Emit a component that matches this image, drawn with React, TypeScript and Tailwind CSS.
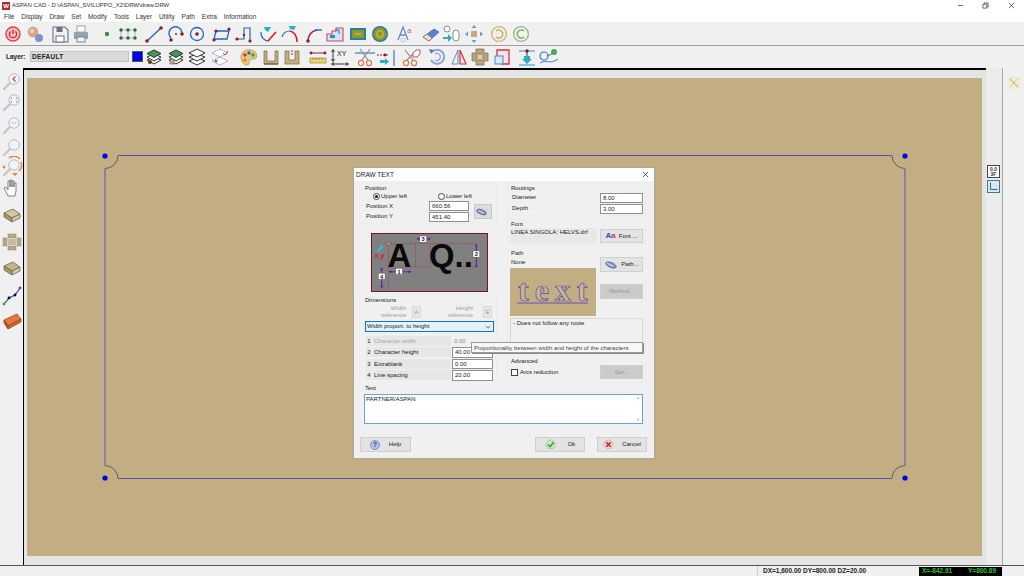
import type { ReactNode } from 'react';

const menus = ['File', 'Display', 'Draw', 'Set', 'Modify', 'Tools', 'Layer', 'Utility', 'Path', 'Extra', 'Information'];

function Ic({ className = '', children }: { className?: string; children: ReactNode }) {
  return (
    <svg viewBox="0 0 22 22" className={`w-[22px] h-[22px] shrink-0 ${className}`} fill="none">
      {children}
    </svg>
  );
}

const Dot = ({ x, y, c = '#8a1c2c', r = 1.4 }: { x: number; y: number; c?: string; r?: number }) => (
  <circle cx={x} cy={y} r={r} fill={c} />
);

function Magnifier({ children }: { children?: ReactNode }) {
  return (
    <Ic>
      <path d="M9 13 L3 19" stroke="#c4c4c4" strokeWidth="2.2" strokeLinecap="round" />
      <circle cx="13" cy="9" r="5.2" fill="#f0f3f8" stroke="#b4bdca" strokeWidth="1" />
      {children}
    </Ic>
  );
}

function Layers({ c, stroke = '#333', children }: { c: string; stroke?: string; children?: ReactNode }) {
  return (
    <Ic>
      <path d="M11 11 L18 14 L11 18 L4 14 Z" fill="#fff" stroke={stroke} />
      <path d="M11 8 L18 11 L11 15 L4 11 Z" fill="#fff" stroke={stroke} />
      <path d="M11 4 L18 7.5 L11 11.5 L4 7.5 Z" fill={c} stroke={stroke} />
      {children}
    </Ic>
  );
}

function BoxIcon({ top = '#c4b48a' }: { top?: string }) {
  return (
    <Ic>
      <path d="M3 9 L12 5 L19 10 L11 14 Z" fill={top} stroke="#6a6450" strokeWidth="0.8" />
      <path d="M3 9 L3 13 L11 18 L11 14 Z" fill="#a8986e" stroke="#6a6450" strokeWidth="0.8" />
      <path d="M11 14 L19 10 L19 14 L11 18 Z" fill="#d4c8a8" stroke="#6a6450" strokeWidth="0.8" />
    </Ic>
  );
}

function Field({ value, className = 'w-[40px] h-[10px]' }: { value: string; className?: string }) {
  return (
    <div className={`${className} bg-white border border-[#8f8f8f] pl-[2px] leading-[9px] shrink-0`}>{value}</div>
  );
}

function Btn({ className, icon, label, disabled }: { className: string; icon?: ReactNode; label: string; disabled?: boolean }) {
  return (
    <div
      className={`${className} flex items-center justify-center shrink-0 border border-[#d0d0d0] ${
        disabled ? 'bg-[#cbcbcb] text-[#9a9a9a]' : 'bg-[#e3e3e3]'
      }`}
    >
      {icon}
      <span>{label}</span>
    </div>
  );
}

const GroupLabel = ({ children }: { children: ReactNode }) => <div className="h-[7px] leading-[7px]">{children}</div>;

const PathGlyph = () => (
  <svg viewBox="0 0 14 10" className="w-[14px] h-[10px] mr-[3px]" fill="none">
    <ellipse cx="7" cy="5" rx="5.5" ry="2.4" transform="rotate(22 7 5)" fill="#8f9ed0" stroke="#4a568f" strokeWidth="0.8" />
    <path d="M3 3 L9 6.5" stroke="#e8e8f4" strokeWidth="0.9" />
  </svg>
);

function DimRow({ n, label, value, off }: { n: string; label: string; value: string; off?: boolean }) {
  return (
    <div className="flex h-[11.5px] items-center">
      <div className="w-[6px] ml-[1px] h-[10px] bg-[#e8e8e8] text-center leading-[10px]">{n}</div>
      <div className={`w-[78px] ml-[1px] h-[10px] bg-[#e6e6e6] pl-[1px] leading-[10px] ${off ? 'text-[#a8a8a8]' : ''}`}>{label}</div>
      {off ? (
        <div className="w-[41px] ml-[1px] h-[10px] pl-[2px] leading-[10px] text-[#8a8a8a]">{value}</div>
      ) : (
        <Field value={value} className="w-[41px] ml-[1px] h-[10.5px]" />
      )}
    </div>
  );
}

function Preview() {
  return (
    <svg viewBox="0 0 117 59" className="ml-[12px] mt-[9px] w-[117px] h-[59px] block border border-[#7c1522] bg-[#808080]">
      <g stroke="#a03040" strokeWidth="0.6" strokeDasharray="1.5 1">
        <path d="M16 10 H107 M44 10 V34 M59 10 V34 M16 34 H59 M16 10 V57 M88 34 H107" />
      </g>
      <text x="15" y="34" fontFamily="Liberation Sans" fontWeight="700" fontSize="34" fill="#0a0a0a">A</text>
      <text x="58" y="34" fontFamily="Liberation Sans" fontWeight="700" fontSize="34" fill="#0a0a0a">Q..</text>
      <g stroke="#6a1fa0" strokeWidth="1.1">
        <path d="M46 5 H59 M107 11 V34 M17 39 H39 M9 35 V56" />
      </g>
      <path
        d="M45 5 L48 3.4 V6.6 Z M60 5 L57 3.4 V6.6 Z M107 10 L105.4 13 H108.6 Z M107 35 L105.4 32 H108.6 Z M16 39 L19 37.4 V40.6 Z M40 39 L37 37.4 V40.6 Z M9 34.5 L7.4 37.5 H10.6 Z M9 56.5 L7.4 53.5 H10.6 Z"
        fill="#6a1fa0"
      />
      <circle cx="16" cy="10" r="1.6" fill="#d8a070" stroke="#6a3a20" strokeWidth="0.5" />
      <path d="M5 18 L10 12" stroke="#20c8d8" strokeWidth="2.2" />
      <text x="1.5" y="25" fontFamily="Liberation Sans" fontWeight="700" fontSize="7.5" fill="#d02030">x,y</text>
      {[
        ['3', 48.5, 2],
        ['2', 103.5, 17.5],
        ['1', 23.5, 35.5],
        ['4', 5.5, 40.5],
      ].map(([n, x, y]) => (
        <g key={n as string}>
          <rect x={x as number} y={y as number} width="7" height="6.5" fill="#fff" stroke="#333" strokeWidth="0.4" />
          <text x={(x as number) + 1.8} y={(y as number) + 5.6} fontFamily="Liberation Sans" fontWeight="700" fontSize="6" fill="#111">{n}</text>
        </g>
      ))}
    </svg>
  );
}

function Dialog() {
  return (
    <div className="absolute left-[353px] top-[167px] w-[302px] h-[292px] bg-[#f0f0f0] border border-[#aaa69a] text-[6px] text-[#1a1a1a] flex flex-col">
      <div className="h-[13px] shrink-0 bg-white flex items-center justify-between pl-[2px] pr-[5px] text-[6.5px]">
        <span>DRAW TEXT</span>
        <svg viewBox="0 0 8 8" className="w-[7px] h-[7px]" stroke="#333" strokeWidth="0.9"><path d="M1 1 L7 7 M7 1 L1 7" /></svg>
      </div>

      <div className="flex h-[203px] shrink-0">
        {/* left column */}
        <div className="w-[148px] ml-[5px] flex flex-col">
          <div className="mt-[2px] h-[41px] w-[138px] pl-[5px] pt-[1px] border border-[#ececec]">
            <GroupLabel>Position</GroupLabel>
            <div className="flex h-[9px] items-center ml-[8px]">
              <div className="flex items-center w-[65px]">
                <div className="w-[7px] h-[7px] rounded-full border border-[#444] bg-white flex items-center justify-center mr-[1px]">
                  <div className="w-[3px] h-[3px] rounded-full bg-[#111]" />
                </div>
                Upper left
              </div>
              <div className="flex items-center">
                <div className="w-[7px] h-[7px] rounded-full border border-[#444] bg-white mr-[1px]" />
                Lower left
              </div>
            </div>
            <div className="flex items-center">
              <div className="ml-[1px] w-[103px]">
                <div className="flex h-[10.5px] items-center"><span className="w-[63px]">Position X</span><Field value="660.56" /></div>
                <div className="flex h-[10.5px] items-center"><span className="w-[63px]">Position Y</span><Field value="451.40" /></div>
              </div>
              <div className="ml-[5px] w-[18px] h-[15px] bg-[#dcdcdc] border border-[#c8c8c8] flex items-center justify-center">
                <PathGlyph />
              </div>
            </div>
          </div>

          <Preview />

          <div className="mt-[4px] w-[138px] h-[84px] pl-[5px] border border-[#ececec]">
            <GroupLabel>Dimensions</GroupLabel>
            <div className="flex h-[13px] mt-[1px] items-center text-[#a0a0a0] leading-[7px] text-right">
              <div className="w-[41px]">Width<br />reference</div>
              <div className="ml-[6px] w-[9px] h-[12px] bg-[#e6e6e6] border border-[#d8d8d8] text-center leading-[10px]">A</div>
              <div className="ml-[13px] w-[39px]">Height<br />reference</div>
              <div className="ml-[10px] w-[9px] h-[12px] bg-[#e6e6e6] border border-[#d8d8d8] text-center leading-[10px]">E</div>
            </div>
            <div className="mt-[3px] w-[129px] h-[11px] bg-[#e5f1fb] border border-[#0078d7] flex items-center justify-between pl-[1px] pr-[2px]">
              <span>Width proport. to height</span>
              <svg viewBox="0 0 8 5" className="w-[6px] h-[4px]" fill="none" stroke="#333" strokeWidth="0.9"><path d="M1 1 L4 4 L7 1" /></svg>
            </div>
            <div className="mt-[3px]">
              <DimRow n="1" label="Character width" value="0.00" off />
              <DimRow n="2" label="Character height" value="40.00" />
              <DimRow n="3" label="Extrablank" value="0.00" />
              <DimRow n="4" label="Line spacing" value="20.00" />
            </div>
          </div>
        </div>

        {/* right column */}
        <div className="w-[139px] flex flex-col">
          <div className="mt-[2px] h-[33px] pl-[3px] pt-[1px] border border-[#ececec]">
            <GroupLabel>Routings</GroupLabel>
            <div className="flex h-[11px] items-center"><span className="w-[89px] pl-[1px]">Diameter</span><Field value="8.00" className="w-[43px] h-[10px]" /></div>
            <div className="flex h-[11px] items-center"><span className="w-[89px] pl-[1px]">Depth</span><Field value="3.00" className="w-[43px] h-[10px]" /></div>
          </div>

          <div className="mt-[3px] h-[26px] pl-[2px] pt-[1px] border border-[#ececec]">
            <div className="ml-[1px]"><GroupLabel>Font</GroupLabel></div>
            <div className="flex">
              <div className="w-[87px] h-[15px] bg-[#e8e8e8] pl-[1px] leading-[8px]">LINEA SINGOLA: HELVS.drf</div>
              <Btn
                className="ml-[3px] mt-[1px] w-[43px] h-[14px]"
                label="Font ..."
                icon={<span className="mr-[3px] text-[8px] font-bold text-[#1f4fc0]">A<span className="text-[#c04060]">a</span></span>}
              />
            </div>
          </div>

          <div className="mt-[3px] h-[135px] pl-[2px] pt-[1px] border border-[#ececec]">
            <div className="ml-[1px]"><GroupLabel>Path</GroupLabel></div>
            <div className="flex">
              <div className="w-[87px]">
                <div className="h-[11px] leading-[11px] pl-[1px]">None</div>
                <svg viewBox="0 0 86 48" className="w-[86px] h-[48px] block bg-[#c2ae82]">
                  <text x="8" y="33" fontFamily="Liberation Serif" fontWeight="700" fontSize="32" letterSpacing="6" fill="#c9b68e" stroke="#5a48b8" strokeWidth="0.7">text</text>
                  <path d="M7 35 H78" stroke="#5a48b8" strokeWidth="0.9" />
                </svg>
              </div>
              <div className="ml-[3px]">
                <Btn className="w-[43px] h-[15px]" label="Path..." icon={<PathGlyph />} />
                <Btn className="mt-[12px] w-[43px] h-[15px]" label="Method..." disabled />
              </div>
            </div>
            <div className="mt-[2px] w-[133px] h-[27px] border border-[#d8d8d8] pl-[2px] leading-[9px]">- Does not follow any route</div>
            <div className="mt-[13px] ml-[1px]"><GroupLabel>Advanced</GroupLabel></div>
            <div className="flex items-center">
              <div className="ml-[1px] w-[7px] h-[7px] bg-white border border-[#444]" />
              <span className="ml-[2px] w-[80px]">Arcs reduction</span>
              <Btn className="w-[43px] h-[14px]" label="Set..." disabled />
            </div>
          </div>
        </div>
      </div>

      <div className="ml-[11px] mt-[1px] h-[7px] leading-[7px]">Text</div>
      <div className="ml-[10px] mt-[2px] w-[279px] h-[30px] bg-white border border-[#6aa3d8] flex justify-between pl-[1px] leading-[9px]">
        <span>PARTNER/ASPAN</span>
        <div className="w-[7px] flex flex-col justify-between items-center text-[#b0b0b0] text-[4px] leading-[6px] pr-[1px]">
          <span>▲</span><span>▼</span>
        </div>
      </div>

      <div className="flex ml-[6px] mt-[13px]">
        <Btn
          className="w-[51px] h-[15px]"
          label="Help"
          icon={<div className="w-[10px] h-[10px] mr-[9px] rounded-full bg-[#b8c4e4] border border-[#7f8fc0] text-center text-[#2a3f90] font-bold text-[7px] leading-[8px]">?</div>}
        />
        <Btn
          className="ml-[124px] w-[50px] h-[15px]"
          label="Ok"
          icon={
            <svg viewBox="0 0 12 12" className="w-[11px] h-[11px] mr-[12px]">
              <circle cx="6" cy="6" r="5" fill="#c9e8c0" stroke="#8fb888" strokeWidth="0.6" />
              <path d="M3 6 L5.5 8.4 L9.4 3.6" fill="none" stroke="#2a9a40" strokeWidth="1.5" />
            </svg>
          }
        />
        <Btn
          className="ml-[12px] w-[50px] h-[15px]"
          label="Cancel"
          icon={
            <svg viewBox="0 0 12 12" className="w-[11px] h-[11px] mr-[8px]">
              <circle cx="6" cy="6" r="5" fill="#f4d0d0" stroke="#c89a9a" strokeWidth="0.6" />
              <path d="M3.6 3.6 L8.4 8.4 M8.4 3.6 L3.6 8.4" stroke="#d02030" strokeWidth="1.7" />
            </svg>
          }
        />
      </div>

      {/* tooltip */}
      <div className="absolute left-[117px] top-[174px] w-[172px] h-[11px] bg-[#f8f8f8] border border-[#9a9a9a] shadow-[1px_1px_0_#8a8a8a] pl-[2px] leading-[10px] text-[#444]">
        Proportionality between width and height of the characters
      </div>
    </div>
  );
}

function TopToolbar() {
  return (
    <div className="h-[23px] shrink-0 bg-[#f0f0f0] flex items-center pl-[2px]">
      <Ic>
        <circle cx="11" cy="11" r="7" fill="#f6c4c4" stroke="#e0404a" strokeWidth="1.4" />
        <path d="M8.6 8.4 A3.6 3.6 0 1 0 13.4 8.4 M11 6.5 V11" stroke="#d82030" strokeWidth="1.3" />
      </Ic>
      <Ic>
        <circle cx="9" cy="9" r="5.4" fill="#d8a888" />
        <circle cx="8" cy="8" r="2.2" fill="#ecd0bc" />
        <circle cx="15" cy="15" r="4" fill="#8090d0" />
      </Ic>
      <Ic className="ml-[3px]">
        <path d="M4 4 H16 L19 7 V19 H4 Z" fill="#eef0f4" stroke="#6a7280" strokeWidth="1.1" />
        <rect x="7.5" y="4" width="6" height="5" fill="#6a7280" />
        <rect x="7" y="13" width="8" height="6" fill="#fff" stroke="#6a7280" />
      </Ic>
      <Ic className="ml-[-1px]">
        <rect x="7" y="3" width="8" height="6" fill="#fff" stroke="#9aa4b0" />
        <rect x="4" y="9" width="14" height="7" fill="#96a2ae" />
        <rect x="7" y="14" width="8" height="5" fill="#f4f4f4" stroke="#7a8490" />
      </Ic>
      <Ic className="ml-[4px]"><circle cx="11" cy="11" r="2.2" fill="#3d8a44" /></Ic>
      <Ic className="ml-[-1px]">
        <path d="M4 7 H18 M4 15 H18 M11 7 V15 M4 7 V15 M18 7 V15" stroke="#7a9a70" strokeWidth="0.6" />
        {[4, 11, 18].map((x) => (
          <g key={x}><Dot x={x} y={7} c="#2c6a38" r={1.7} /><Dot x={x} y={15} c="#2c6a38" r={1.7} /></g>
        ))}
      </Ic>
      <Ic className="ml-[4px]">
        <path d="M4 18 L18 5" stroke="#2268b8" strokeWidth="1.4" />
        <Dot x={4} y={18} r={1.8} /><Dot x={18} y={5} r={1.8} />
      </Ic>
      <Ic>
        <path d="M6 15 A6.5 6.5 0 1 1 17 10" stroke="#2268b8" strokeWidth="1.3" />
        <Dot x={6} y={17} r={1.8} /><Dot x={17} y={11} r={1.8} /><Dot x={11} y={11} r={1} />
      </Ic>
      <Ic className="ml-[-1px]">
        <circle cx="11" cy="11" r="6.5" stroke="#2268b8" strokeWidth="1.3" />
        <Dot x={11} y={11} r={1.8} />
      </Ic>
      <Ic className="ml-[3px]">
        <path d="M5 8 H18 L16 16 H3 Z" stroke="#2268b8" strokeWidth="1.3" />
        <Dot x={5} y={8} r={1.6} /><Dot x={18} y={6} r={1.6} /><Dot x={3} y={17} r={1.6} />
      </Ic>
      <Ic>
        <path d="M4 16 H11 V5 H17 V18" stroke="#2268b8" strokeWidth="1.2" />
        <Dot x={4} y={16} r={1.6} /><Dot x={11} y={12} r={1.2} /><Dot x={17} y={18} r={1.6} />
      </Ic>
      <Ic className="ml-[2px]">
        <path d="M4 9 A8 8 0 0 0 12 18" stroke="#2268b8" strokeWidth="1.2" />
        <path d="M11 18 L19 9" stroke="#d02030" strokeWidth="1.6" />
        <path d="M7 4 H14 L11 9 L8 7" fill="#28b0c0" />
      </Ic>
      <Ic>
        <path d="M3 14 A8 8 0 0 1 11 8" stroke="#2268b8" strokeWidth="1.2" />
        <path d="M11 8 C15 9 18 13 18 19" stroke="#d02030" strokeWidth="1.6" />
        <path d="M10 3 H17 L15 7 L11 6" fill="#28b0c0" />
      </Ic>
      <Ic className="ml-[1px]">
        <path d="M6 19 C6 12 9 8 15 7" stroke="#b02030" strokeWidth="1.5" />
        <Dot x={6} y={18} r={1.8} />
        <path d="M13 7 H20" stroke="#2268b8" strokeWidth="1.4" />
      </Ic>
      <Ic>
        <path d="M3 18 V11 H8 V8 H12 V5 H19 V18 Z" fill="#d0e4f4" stroke="#d84060" strokeWidth="1.1" />
        <rect x="6" y="12" width="5" height="3" fill="#2a90b8" />
        <path d="M11 7 L15 7 L15 11" stroke="#2268b8" />
      </Ic>
      <Ic className="ml-[1px]">
        <rect x="3" y="5" width="16" height="12" fill="#2a7d9c" />
        <rect x="5" y="7" width="12" height="8" fill="#8a9a30" />
        <rect x="8" y="10" width="6" height="2" fill="#b8b040" />
      </Ic>
      <Ic>
        <circle cx="11" cy="11" r="8" fill="#2a7d9c" />
        <circle cx="11" cy="11" r="6.4" fill="#8a9a30" />
        <circle cx="11" cy="11" r="4" fill="#c8b030" />
        <circle cx="11" cy="11" r="2.4" fill="#8a9a30" />
      </Ic>
      <Ic className="ml-[3px]">
        <path d="M4 17 L9 4 L14 17 M6 12 H12" stroke="#6a8ac0" strokeWidth="1.3" />
        <circle cx="9" cy="17" r="2.2" stroke="#a8b8d4" strokeWidth="0.8" />
        <text x="13" y="10" fontSize="8" fontFamily="Liberation Sans" fill="#c060a0">a</text>
      </Ic>
      <Ic className="ml-[4px]">
        <path d="M3 14 L14 6 L19 9 L9 18 Z" fill="#5a80d8" stroke="#35508f" strokeWidth="0.6" />
        <path d="M3 14 L7 11 L12 15 L9 18 Z" fill="#f0e4c4" stroke="#6a6040" strokeWidth="0.6" />
      </Ic>
      <Ic className="ml-[-1px]">
        <circle cx="6" cy="6" r="3" stroke="#8a8a8a" fill="#fff" />
        <rect x="12" y="7" width="6" height="11" rx="3" stroke="#8a8a8a" fill="#fff" />
        <path d="M2 14 H7 V11 L11 15 L7 19 V16 H2 Z" fill="#28b0c0" />
      </Ic>
      <Ic>
        <rect x="8" y="8" width="6" height="6" fill="#c8a878" />
        <path d="M11 2 L13.5 5 H8.5 Z M11 20 L13.5 17 H8.5 Z M2 11 L5 8.5 V13.5 Z M20 11 L17 8.5 V13.5 Z" fill="#6a9ad8" />
      </Ic>
      <Ic className="ml-[3px]">
        <circle cx="11" cy="11" r="7.4" fill="#f4f0e0" stroke="#c8b888" strokeWidth="1.4" />
        <path d="M8 8 A4 4 0 1 1 8 14" stroke="#b8a468" strokeWidth="1.2" />
      </Ic>
      <Ic>
        <circle cx="11" cy="11" r="7.4" fill="#eef4e8" stroke="#98bc88" strokeWidth="1.4" />
        <path d="M14 8 A4 4 0 1 0 14 14" stroke="#70a060" strokeWidth="1.2" />
      </Ic>
    </div>
  );
}

function LayerToolbar() {
  return (
    <div className="h-[22px] shrink-0 bg-[#f0f0f0] flex items-center pl-[6px] pb-[1px] text-[6.5px] font-bold">
      <span className="w-[24px]">Layer:</span>
      <div className="w-[99px] h-[11px] bg-[#d9d9d9] border border-[#c4c4c4] pl-[1px] leading-[9px] tracking-[0.3px]">DEFAULT</div>
      <div className="ml-[3px] w-[11px] h-[11px] bg-[#0000e8] border border-[#555] shrink-0" />
      <Layers c="#3d9a50"><circle cx="7" cy="16" r="2" fill="#6a3a20" /></Layers>
      <Layers c="#3d9a50"><rect x="5" y="13" width="4" height="5" fill="#c8a878" stroke="#555" strokeWidth="0.5" /></Layers>
      <Ic className="ml-[-1px]">
        <path d="M11 12 L19 15 L11 19 L3 15 Z" fill="#fff" stroke="#333" />
        <path d="M11 8 L19 11 L11 15 L3 11 Z" fill="#fff" stroke="#333" />
        <path d="M11 3 L19 7 L11 11 L3 7 Z" fill="#fff" stroke="#333" />
      </Ic>
      <Ic className="ml-[1px]">
        <path d="M11 3 L19 7 L11 11 L3 7 Z M11 11 L19 15 L11 19 L3 15 Z" stroke="#8a8a9a" strokeWidth="0.9" strokeDasharray="1.5 0.8" fill="#fff" />
        <path d="M14 7 L16 9 L19 5" stroke="#c83050" />
        <circle cx="7" cy="15" r="1.5" fill="#6a70c0" />
      </Ic>
      <Ic className="ml-[7px]">
        <path d="M3 11 C3 5 9 3 13 4 C18 5 20 9 18 12 C16 14 14 12 12 14 C10 17 12 19 9 19 C5 19 3 15 3 11 Z" fill="#e8c878" stroke="#a08040" strokeWidth="0.6" />
        <circle cx="7" cy="9" r="1.7" fill="#d83030" />
        <circle cx="11" cy="7" r="1.7" fill="#3060d0" />
        <circle cx="15" cy="9" r="1.7" fill="#30a040" />
        <circle cx="7" cy="14" r="1.7" fill="#e08020" />
      </Ic>
      <Ic>
        <path d="M4 5 H7 V15 H15 V5 H18 V18 H4 Z" fill="#c2ae82" stroke="#7a6a44" strokeWidth="0.7" />
        <path d="M4 18 H18" stroke="#5a4e30" />
      </Ic>
      <Ic className="ml-[-1px]">
        <path d="M4 5 H8 V14 H14 V5 H18 V18 H4 Z" fill="#c2ae82" stroke="#7a6a44" strokeWidth="0.7" />
        <path d="M11 4 V10" stroke="#5a4e30" strokeDasharray="2 1" />
      </Ic>
      <Ic className="ml-[4px]">
        <path d="M4 7 H18" stroke="#8a2030" strokeWidth="1" />
        <Dot x={4} y={7} /><Dot x={18} y={7} />
        <rect x="3" y="12" width="16" height="5" fill="#e8d468" stroke="#8a7a30" strokeWidth="0.6" />
        <path d="M6 12 V14 M9 12 V14 M12 12 V14 M15 12 V14" stroke="#6a5a20" strokeWidth="0.6" />
      </Ic>
      <Ic className="ml-[1px]">
        <path d="M3 4 V15 M1.5 6 L3 3.5 L4.5 6 M1.5 13 L3 15.5 L4.5 13 M2 18 H18 M4 16.5 L1.5 18 L4 19.5 M16 16.5 L18.5 18 L16 19.5" stroke="#222" strokeWidth="0.9" />
        <text x="7" y="10" fontFamily="Liberation Sans" fontSize="7" fontWeight="400" fill="#222">XY</text>
      </Ic>
      <Ic className="ml-[2px]">
        <path d="M1 7 H21" stroke="#3a7ac0" strokeWidth="1.2" />
        <path d="M6 3 L14 14 M16 3 L8 14" stroke="#8a8a8a" strokeWidth="1.1" />
        <circle cx="7" cy="17" r="2.6" stroke="#d87a50" strokeWidth="1.2" />
        <circle cx="15" cy="17" r="2.6" stroke="#d87a50" strokeWidth="1.2" />
      </Ic>
      <Ic>
        <path d="M1 9 H13" stroke="#a02030" strokeDasharray="2 1" />
        <Dot x={9} y={9} />
        <path d="M18 4 V20" stroke="#3a7ac0" strokeWidth="1.2" />
        <path d="M4 14 H9 V12 L13 15.5 L9 19 V17 H4 Z" fill="#28b0c0" />
      </Ic>
      <Ic className="ml-[2px]">
        <path d="M5 4 L13 14 M14 7 L7 14" stroke="#8a8a8a" strokeWidth="1.1" />
        <circle cx="6" cy="17" r="2.6" stroke="#d87a50" strokeWidth="1.2" />
        <circle cx="14" cy="17" r="2.6" stroke="#d87a50" strokeWidth="1.2" />
        <path d="M13 7 L16 4 H20 V8 L17 11 H13 Z" fill="#fff" stroke="#d84060" strokeWidth="1" />
      </Ic>
      <Ic className="ml-[4px]">
        <path d="M6 6 A7 7 0 1 1 5 14" stroke="#8aa4d0" strokeWidth="2" />
        <path d="M3 3 L8 4 L5 8 Z" fill="#5a7ac0" />
        <path d="M9 8 A3.5 3.5 0 1 1 9 14" stroke="#8aa4d0" strokeWidth="1.2" />
      </Ic>
      <Ic>
        <path d="M10 4 L4 18 H10 Z" fill="#e8f0f8" stroke="#6a8ab0" strokeWidth="1" />
        <path d="M12 4 L18 18 H12 Z" fill="#f4e4e4" stroke="#d83040" strokeWidth="1.2" />
      </Ic>
      <Ic className="ml-[-1px]">
        <path d="M7 3 H15 V7 H19 V15 H15 V19 H7 V15 H3 V7 H7 Z" fill="#b8a47c" stroke="#7a6a4a" strokeWidth="0.7" />
        <rect x="8" y="8" width="6" height="6" fill="#d8ccb0" stroke="#7a6a4a" strokeWidth="0.6" />
      </Ic>
      <Ic>
        <path d="M6 4 H18 V18 H11 V11 H6 Z" fill="#f4e4e8" stroke="#d83040" strokeWidth="1.3" />
        <rect x="4" y="10" width="8" height="8" fill="#d8e8f4" stroke="#4a8ab8" strokeWidth="1" />
      </Ic>
      <Ic className="ml-[3px]">
        <path d="M3 5 H19 M3 19 H19" stroke="#3a90c8" strokeWidth="1" />
        <Dot x={11} y={5} r={1.8} />
        <path d="M11 6 V10" stroke="#333" />
        <path d="M8 10 H14 V13 H16 L11 18 L6 13 H8 Z" fill="#28b0c0" />
      </Ic>
      <Ic>
        <circle cx="6" cy="10" r="4" stroke="#3a7ac0" strokeWidth="1.2" />
        <circle cx="16" cy="6" r="3" fill="#50a848" />
        <path d="M9 10 L14 8 M2 17 C8 13 12 19 20 13" stroke="#3a7ac0" strokeWidth="1" />
      </Ic>
    </div>
  );
}

function LeftToolbar() {
  return (
    <div className="w-[23px] shrink-0 bg-[#f0f0f0] flex flex-col items-center pt-[2px]">
      <Magnifier><path d="M14.5 6.5 L12 9 L14.5 11.5" stroke="#c84060" strokeWidth="1.2" /></Magnifier>
      <div className="mt-[-1px]"><Magnifier><path d="M11 7 H10 V8 M15 7 H16 V8 M11 11 H10 V10 M15 11 H16 V10" stroke="#5a6a80" strokeWidth="0.7" /></Magnifier></div>
      <div className="mt-[1px]"><Magnifier><path d="M10.5 9 H15.5" stroke="#9aa4b0" strokeWidth="1.2" strokeDasharray="1 0.6" /></Magnifier></div>
      <Magnifier />
      <div className="mt-[-2px]">
        <Magnifier>
          <path d="M8 2 A8 8 0 0 1 19 3 M20 6 A8 8 0 0 1 18 15" stroke="#e08a40" strokeWidth="1.4" />
          <path d="M1 11 L4 9 V13 Z M14 20 L11 17 H17 Z" fill="#e08a40" />
        </Magnifier>
      </div>
      <Ic className="mt-[-1px]">
        <path d="M7 19 L3 11 L5 10 L7 13 V4 H9 V10 V3 H11 V10 V4 H13 V10 V6 H15 V14 L14 19 Z" fill="#fff" stroke="#666" strokeWidth="0.8" />
      </Ic>
      <div className="mt-[5px]"><BoxIcon top="#d4c8a0" /></div>
      <Ic className="mt-[5px]">
        <rect x="7" y="3" width="8" height="4" fill="#b8a88a" stroke="#8a8064" strokeWidth="0.5" />
        <rect x="7" y="15" width="8" height="4" fill="#b8a88a" stroke="#8a8064" strokeWidth="0.5" />
        <rect x="2" y="7" width="4" height="8" fill="#b8a88a" stroke="#8a8064" strokeWidth="0.5" />
        <rect x="16" y="7" width="4" height="8" fill="#b8a88a" stroke="#8a8064" strokeWidth="0.5" />
        <rect x="7" y="8" width="8" height="6" fill="#c8bca0" />
      </Ic>
      <div className="mt-[4px]"><BoxIcon /></div>
      <Ic className="mt-[5px]">
        <path d="M4 19 L8 14 L14 11 L19 4" stroke="#1a50c0" strokeWidth="1.2" />
        <Dot x={8} y={14} c="#111" /><Dot x={14} y={11} c="#111" />
        <Dot x={19} y={4} c="#a03090" /><Dot x={3} y={20} c="#40a040" />
      </Ic>
      <Ic className="mt-[3px]">
        <path d="M3 11 L16 5 L20 10 L7 17 Z" fill="#e87838" stroke="#8a4420" strokeWidth="0.7" />
        <path d="M3 11 L3 14 L7 20 L7 17 Z" fill="#b85820" stroke="#8a4420" strokeWidth="0.7" />
        <path d="M7 17 L20 10 L20 13 L7 20 Z" fill="#d06428" stroke="#8a4420" strokeWidth="0.7" />
      </Ic>
    </div>
  );
}

function Drawing() {
  const corners = [
    [105, 156],
    [905, 156],
    [105, 478],
    [905, 478],
  ];
  return (
    <svg viewBox="27 78 955 478" className="w-full h-full block">
      <path d="M118 155.5 H892 M905 168.5 V465.5 M892 478.5 H118 M105 465.5 V168.5" stroke="#5c50b0" strokeWidth="1" fill="none" />
      <path
        d="M892 155.5 A13 13 0 0 0 905 168.5 M905 465.5 A13 13 0 0 0 892 478.5 M118 478.5 A13 13 0 0 0 105 465.5 M105 168.5 A13 13 0 0 0 118 155.5"
        stroke="#5f5f66"
        strokeWidth="1"
        fill="none"
      />
      {corners.map(([x, y]) => (
        <circle key={`${x}-${y}`} cx={x} cy={y} r="2.6" fill="#0000e0" />
      ))}
    </svg>
  );
}

export default function App() {
  return (
    <div className="relative w-[1024px] h-[576px] overflow-hidden bg-[#f0f0f0] flex flex-col text-[#222] font-['Liberation_Sans',sans-serif]">
      {/* title bar */}
      <div className="h-[11px] shrink-0 bg-white flex items-center pl-[2px] text-[6px] leading-[11px]">
        <div className="w-[8px] h-[8px] bg-[#b02a30] text-white text-[6px] font-bold text-center leading-[8px] mr-[2px]">W</div>
        <span className="text-[#333]">ASPAN CAD - D:\ASPAN_SVILUPPO_X2\DRW\draw.DRW</span>
        <div className="ml-auto flex items-center text-[#333]">
          <svg viewBox="0 0 8 8" className="w-[7px] h-[7px] mr-[18px]" stroke="#333" strokeWidth="0.8"><path d="M1 4 H7" /></svg>
          <svg viewBox="0 0 8 8" className="w-[7px] h-[7px] mr-[19px]" fill="none" stroke="#333" strokeWidth="0.8"><path d="M1 2.5 H5.5 V7 H1 Z M2.5 2.5 V1 H7 V5.5 H5.5" /></svg>
          <svg viewBox="0 0 8 8" className="w-[7px] h-[7px] mr-[9px]" stroke="#333" strokeWidth="0.8"><path d="M1 1 L7 7 M7 1 L1 7" /></svg>
        </div>
      </div>

      {/* menu */}
      <div className="h-[11px] shrink-0 bg-white flex items-center pl-[4px] gap-[6.8px] text-[6.5px] text-[#333]">
        {menus.map((m) => (
          <span key={m}>{m}</span>
        ))}
      </div>

      <TopToolbar />
      <div className="h-px shrink-0 bg-[#a0a0a0]" />
      <LayerToolbar />

      <div className="flex-1 min-h-0 flex">
        <LeftToolbar />
        <div className="w-[963px] border-l border-t-2 border-black bg-[#e4e4e4] pl-[3px] pr-[4px] pt-[8px] pb-[10px]">
          <div className="w-[955px] h-[478px] bg-[#c2ae82]">
            <Drawing />
          </div>
        </div>
        <div className="w-[16px] shrink-0 bg-[#ebebeb] flex flex-col items-start pt-[97px]">
          <div className="ml-[1px] w-[13px] h-[13px] bg-white border border-[#444] text-[5px] font-bold leading-[5px] text-center text-[#333] pt-[1px]">0.0<br />3F</div>
          <div className="ml-[1px] mt-[2px] w-[13px] h-[13px] bg-[#d8e8f0] border border-[#3a7a9c] text-[5px] leading-[5px] text-[#333] relative">
            <svg viewBox="0 0 13 13" className="w-full h-full" fill="none" stroke="#1a4a70"><path d="M3 2 V10 H11" /></svg>
          </div>
        </div>
        <div className="w-[22px] shrink-0 border-l border-[#a8a8a8] bg-[#f0f0f0] pt-[8px] flex justify-center">
          <svg viewBox="0 0 16 16" className="w-[14px] h-[14px]" fill="none">
            <rect width="16" height="16" fill="#f0ecde" />
            <path d="M3 3 L13 13" stroke="#e0c878" strokeWidth="1.8" />
            <path d="M12 3 L4 12" stroke="#c4c4c4" strokeWidth="1.1" />
          </svg>
        </div>
      </div>

      {/* status bar */}
      <div className="h-[11px] shrink-0 border-t border-[#555] bg-[#f0f0f0] flex items-center text-[6.5px] font-bold">
        <div className="ml-[757px] w-[162px] border-l border-[#d0d0d0] pl-[5px] text-[#222]">DX=1,600.00 DY=800.00 DZ=20.00</div>
        <div className="w-[83px] h-[9px] bg-black text-[#30c030] flex items-center pl-[3px]">
          <span className="w-[46px]">X=-842.91</span>
          <span>Y=800.89</span>
        </div>
      </div>

      <Dialog />
    </div>
  );
}
